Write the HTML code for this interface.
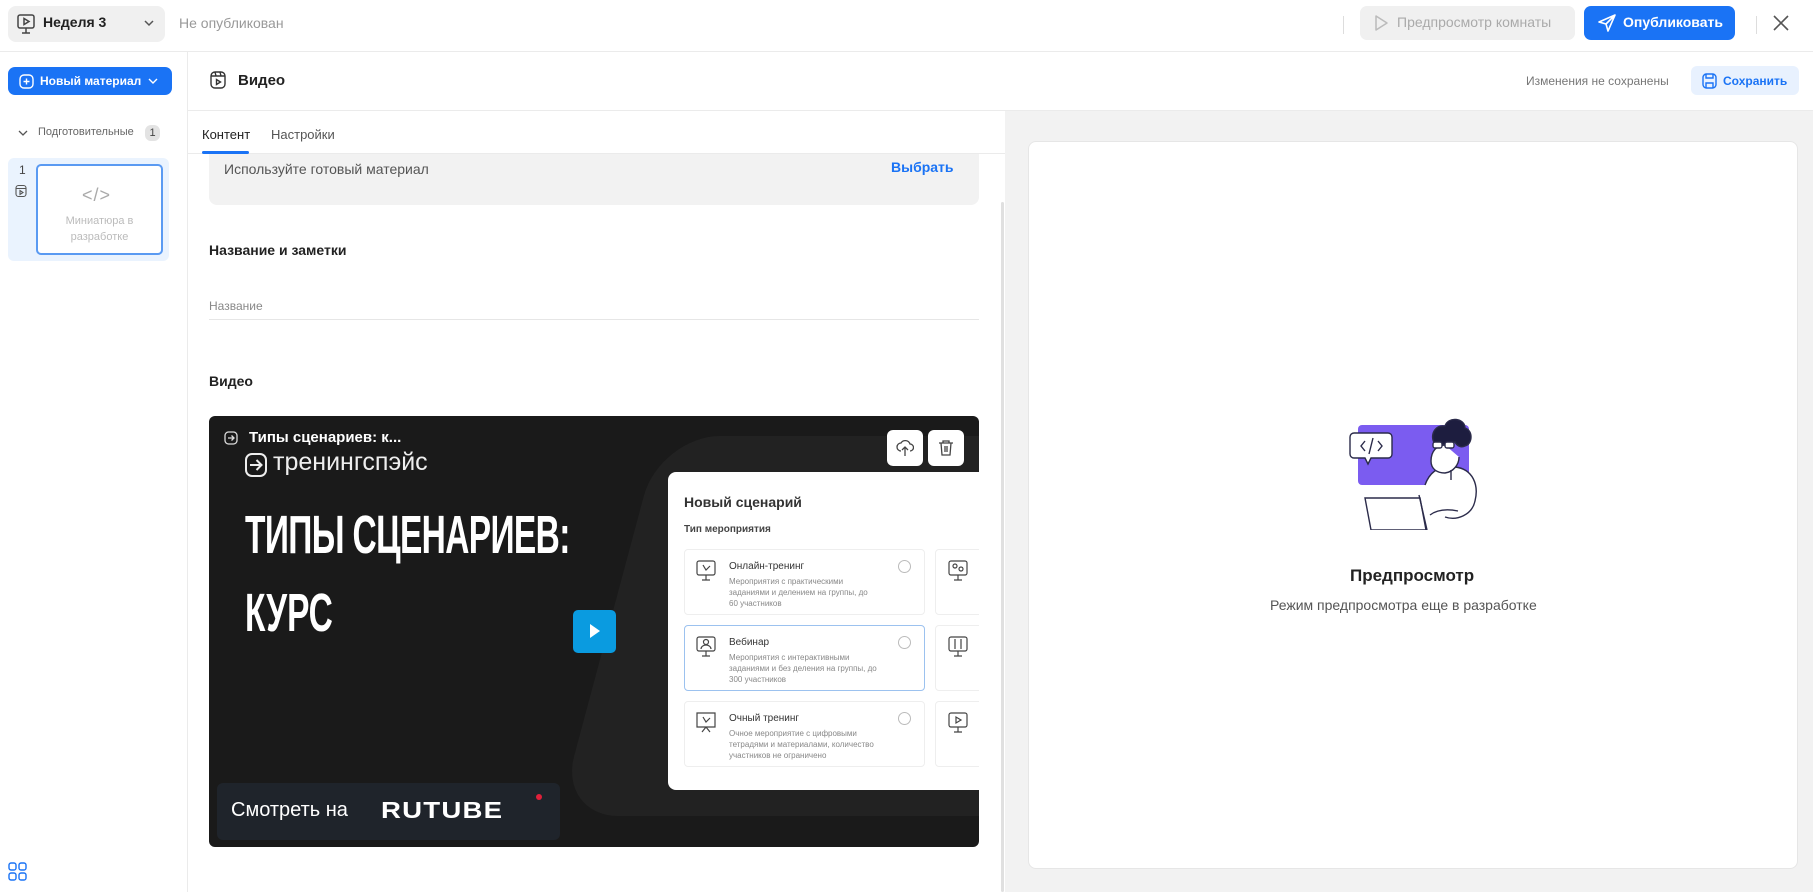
<!DOCTYPE html>
<html><head><meta charset="utf-8"><style>
*{box-sizing:border-box;margin:0;padding:0}
body{width:1813px;height:892px;overflow:hidden;background:#fff;font-family:"Liberation Sans",sans-serif;color:#222;position:relative}
.a{position:absolute}
.t{position:absolute;white-space:nowrap}
</style></head><body>
<div class="a" style="left:0;top:51px;width:1813px;height:1px;background:#ebebeb"></div>
<div class="a" style="left:8px;top:6px;width:157px;height:36px;background:#f0f0f0;border-radius:8px"></div>
<svg class="a" style="left:16px;top:13px" width="20" height="22" viewBox="0 0 20 22" fill="none" stroke="#444" stroke-width="1.5"><rect x="2" y="2" width="16" height="13" rx="2"/><path d="M8 5.5v6l5-3z"/><path d="M10 15v5M6 20h8"/></svg>
<div class="t" style="left:43px;top:14px;font-size:14px;font-weight:bold;color:#222">Неделя 3</div>
<svg class="a" style="left:143px;top:18px" width="12" height="10"><path d="M2 3l4 4 4-4" stroke="#555" stroke-width="1.5" fill="none"/></svg>
<div class="t" style="left:179px;top:15px;font-size:14px;color:#999">Не опубликован</div>
<div class="a" style="left:1343px;top:16px;width:1px;height:18px;background:#ddd"></div>
<div class="a" style="left:1360px;top:6px;width:215px;height:34px;background:#f0f0f0;border-radius:7px"></div>
<svg class="a" style="left:1373px;top:13px" width="16" height="20"><path d="M3 3l11 7-11 7z" stroke="#bbb" stroke-width="1.5" fill="none" stroke-linejoin="round"/></svg>
<div class="t" style="left:1397px;top:14px;font-size:14px;color:#aaa">Предпросмотр комнаты</div>
<div class="a" style="left:1584px;top:6px;width:151px;height:34px;background:#1a73f5;border-radius:7px"></div>
<svg class="a" style="left:1597px;top:13px" width="20" height="20" fill="none" stroke="#fff" stroke-width="1.6" stroke-linejoin="round"><path d="M18 2L2 9l7 2 2 7z M18 2L9 11"/></svg>
<div class="t" style="left:1623px;top:14px;font-size:14px;font-weight:bold;color:#fff">Опубликовать</div>
<div class="a" style="left:1756px;top:16px;width:1px;height:18px;background:#ddd"></div>
<svg class="a" style="left:1772px;top:14px" width="18" height="18"><path d="M2 2l14 14M16 2L2 16" stroke="#555" stroke-width="1.6"/></svg>

<div class="a" style="left:187px;top:52px;width:1px;height:840px;background:#ebebeb"></div>
<div class="a" style="left:8px;top:67px;width:164px;height:28px;background:#1a73f5;border-radius:7px"></div>
<svg class="a" style="left:19px;top:74px" width="15" height="15" fill="none" stroke="#fff" stroke-width="1.4"><rect x="1" y="1" width="13" height="13" rx="4"/><path d="M7.5 4.5v6M4.5 7.5h6"/></svg>
<div class="t" style="left:40px;top:74px;font-size:12px;font-weight:bold;color:#fff">Новый материал</div>
<svg class="a" style="left:148px;top:77px" width="10" height="8"><path d="M1 2l4 4 4-4" stroke="#fff" stroke-width="1.4" fill="none"/></svg>
<svg class="a" style="left:18px;top:129px" width="10" height="8"><path d="M1 2l4 4 4-4" stroke="#555" stroke-width="1.3" fill="none"/></svg>
<div class="t" style="left:38px;top:126px;font-size:11px;color:#666">Подготовительные</div>
<div class="a" style="left:145px;top:125px;width:15px;height:16px;background:#e3e3e3;border-radius:6px;font-size:11px;color:#444;text-align:center;line-height:16px">1</div>
<div class="a" style="left:8px;top:158px;width:161px;height:103px;background:#eaf3fe;border-radius:6px"></div>
<div class="t" style="left:19px;top:163px;font-size:12px;color:#444">1</div>
<svg class="a" style="left:15px;top:184px" width="12" height="14" fill="none" stroke="#555" stroke-width="1.1"><rect x="1" y="1.5" width="10" height="11" rx="2.5"/><path d="M1 4.5h10M5 6.5v4l3-2z"/></svg>
<div class="a" style="left:36px;top:164px;width:127px;height:91px;background:#fff;border:2px solid #5a9af2;border-radius:5px"></div>
<div class="t" style="left:82px;top:185px;font-size:18px;color:#aaa;letter-spacing:1px">&lt;/&gt;</div>
<div class="a" style="left:36px;top:213px;width:127px;text-align:center;font-size:11px;color:#bbb;line-height:16px">Миниатюра в<br>разработке</div>
<svg class="a" style="left:8px;top:862px" width="20" height="20" fill="none" stroke="#1a73f5" stroke-width="1.4"><rect x="1" y="1" width="7" height="7" rx="2"/><rect x="11" y="1" width="7" height="7" rx="2"/><rect x="1" y="11" width="7" height="7" rx="2"/><rect x="11" y="11" width="7" height="7" rx="2"/></svg>

<div class="a" style="left:188px;top:110px;width:1625px;height:1px;background:#ebebeb"></div>
<svg class="a" style="left:210px;top:70px" width="16" height="20" fill="none" stroke="#333" stroke-width="1.4"><rect x="1" y="2" width="14" height="16" rx="4"/><path d="M1 6h14M5 2l1 4M10 2l1 4M6.5 9.5v5l4-2.5z"/></svg>
<div class="t" style="left:238px;top:72px;font-size:15px;font-weight:bold;color:#222">Видео</div>
<div class="t" style="left:1526px;top:74px;font-size:12px;color:#777">Изменения не сохранены</div>
<div class="a" style="left:1691px;top:66px;width:108px;height:29px;background:#e8f1fe;border-radius:6px"></div>
<svg class="a" style="left:1702px;top:73px" width="15" height="16" fill="none" stroke="#1a73f5" stroke-width="1.4"><rect x="1" y="1" width="13" height="14" rx="3.5"/><path d="M4 1v4h7V1M4 15v-5h7v5"/></svg>
<div class="t" style="left:1723px;top:74px;font-size:12px;font-weight:bold;color:#1a73f5">Сохранить</div>

<div class="t" style="left:202px;top:127px;font-size:13px;color:#222">Контент</div>
<div class="t" style="left:271px;top:127px;font-size:13px;color:#555">Настройки</div>
<div class="a" style="left:188px;top:153px;width:817px;height:1px;background:#ebebeb"></div>
<div class="a" style="left:202px;top:151px;width:47px;height:3px;background:#1a73f5;border-radius:2px"></div>

<div class="a" style="left:209px;top:154px;width:770px;height:51px;background:#f2f2f2;border-radius:0 0 8px 8px"></div>
<div class="t" style="left:224px;top:161px;font-size:14px;color:#555">Используйте готовый материал</div>
<div class="t" style="left:891px;top:159px;font-size:14px;font-weight:bold;color:#1a73f5">Выбрать</div>
<div class="t" style="left:209px;top:242px;font-size:14px;font-weight:bold;color:#222">Название и заметки</div>
<div class="t" style="left:209px;top:299px;font-size:12px;color:#888">Название</div>
<div class="a" style="left:209px;top:319px;width:770px;height:1px;background:#e6e6e6"></div>
<div class="t" style="left:209px;top:373px;font-size:14px;font-weight:bold;color:#222">Видео</div>
<div class="a" style="left:1001px;top:202px;width:3px;height:690px;background:#e0e0e0;border-radius:2px"></div>

<div class="a" style="left:209px;top:416px;width:770px;height:431px;background:#1a1a1a;border-radius:6px;overflow:hidden">
  <div class="a" style="left:400px;top:20px;width:480px;height:380px;background:#222;border-radius:60px;transform:skewX(-15deg)"></div>
  <svg class="a" style="left:15px;top:15px" width="14" height="14" fill="none" stroke="#ddd" stroke-width="1.3"><rect x="1" y="1" width="12" height="12" rx="3.5"/><path d="M4 7h6M7.5 4.5L10 7l-2.5 2.5"/></svg>
  <div class="t" style="left:40px;top:13px;font-size:15px;font-weight:bold;color:#fff">Типы сценариев: к...</div>
  <svg class="a" style="left:35px;top:36px" width="24" height="26" fill="none" stroke="#eee" stroke-width="2"><rect x="2" y="2" width="20" height="22" rx="6"/><path d="M6 13h11M12.5 8l5 5-5 5"/></svg>
  <div class="t" style="left:64px;top:32px;font-size:25px;color:#eee">тренингспэйс</div>
  <div class="t" style="left:36px;top:88px;font-size:54px;font-weight:bold;color:#fff;transform:scaleX(0.62);transform-origin:left;letter-spacing:-1px">ТИПЫ СЦЕНАРИЕВ:</div>
  <div class="t" style="left:36px;top:166px;font-size:54px;font-weight:bold;color:#fff;transform:scaleX(0.62);transform-origin:left">КУРС</div>
  <div class="a" style="left:364px;top:194px;width:43px;height:43px;background:#0a9be0;border-radius:5px"></div>
  <svg class="a" style="left:380px;top:207px" width="12" height="16"><path d="M1 1l10 7-10 7z" fill="#fff"/></svg>
  <div class="a" style="left:8px;top:367px;width:343px;height:57px;background:#1f242b;border-radius:6px"></div>
  <div class="t" style="left:22px;top:383px;font-size:20px;color:#fff">Смотреть на</div>
  <div class="t" style="left:172px;top:381px;font-size:23px;font-weight:bold;color:#fff;letter-spacing:1px;transform:scaleX(1.2);transform-origin:left">RUTUBE</div>
  <div class="a" style="left:327px;top:378px;width:6px;height:6px;background:#e0203a;border-radius:50%"></div>
  <div class="a" style="left:678px;top:14px;width:36px;height:36px;background:#fff;border-radius:6px"></div>
  <svg class="a" style="left:687px;top:22px" width="18" height="20" fill="none" stroke="#444" stroke-width="1.3"><path d="M5 13a4 4 0 0 1 0-8 5 5 0 0 1 9 1 3.5 3.5 0 0 1 0 7M9 18V9M6 12l3-3 3 3"/></svg>
  <div class="a" style="left:719px;top:14px;width:36px;height:36px;background:#fff;border-radius:6px"></div>
  <svg class="a" style="left:729px;top:23px" width="16" height="18" fill="none" stroke="#444" stroke-width="1.3"><path d="M1 4h14M5 4V2h6v2M3 4l1 12h8l1-12M7 7v6M9 7v6"/></svg>
  <div class="a" style="left:459px;top:56px;width:320px;height:318px;background:#fff;border-radius:8px 0 0 8px">
    <div class="t" style="left:16px;top:22px;font-size:14px;font-weight:bold;color:#333">Новый сценарий</div>
    <div class="t" style="left:16px;top:52px;font-size:10px;font-weight:bold;color:#444">Тип мероприятия</div>
    <div class="a" style="left:16px;top:77px;width:241px;height:66px;border:1px solid #eee;border-radius:4px"></div>
    <div class="a" style="left:16px;top:153px;width:241px;height:66px;border:1.5px solid #9cc2ef;border-radius:4px"></div>
    <div class="a" style="left:16px;top:229px;width:241px;height:66px;border:1px solid #eee;border-radius:4px"></div>
    <div class="a" style="left:267px;top:77px;width:60px;height:66px;border:1px solid #eee;border-radius:4px"></div>
    <div class="a" style="left:267px;top:153px;width:60px;height:66px;border:1px solid #eee;border-radius:4px"></div>
    <div class="a" style="left:267px;top:229px;width:60px;height:66px;border:1px solid #eee;border-radius:4px"></div>
    <div class="t" style="left:61px;top:89px;font-size:10px;color:#333">Онлайн-тренинг</div>
    <div class="a" style="left:61px;top:104px;width:148px;font-size:8px;color:#888;line-height:11px">Мероприятия с практическими заданиями и делением на группы, до 60 участников</div>
    <div class="t" style="left:61px;top:165px;font-size:10px;color:#333">Вебинар</div>
    <div class="a" style="left:61px;top:180px;width:150px;font-size:8px;color:#888;line-height:11px">Мероприятия с интерактивными заданиями и без деления на группы, до 300 участников</div>
    <div class="t" style="left:61px;top:241px;font-size:10px;color:#333">Очный тренинг</div>
    <div class="a" style="left:61px;top:256px;width:160px;font-size:8px;color:#888;line-height:11px">Очное мероприятие с цифровыми тетрадями и материалами, количество участников не ограничено</div>
    <div class="a" style="left:230px;top:88px;width:13px;height:13px;border:1px solid #bbb;border-radius:50%"></div>
    <div class="a" style="left:230px;top:164px;width:13px;height:13px;border:1px solid #bbb;border-radius:50%"></div>
    <div class="a" style="left:230px;top:240px;width:13px;height:13px;border:1px solid #bbb;border-radius:50%"></div>
    <svg class="a" style="left:28px;top:88px" width="20" height="22" fill="none" stroke="#444" stroke-width="1.2"><rect x="1" y="1" width="18" height="14" rx="2"/><path d="M10 15v5M6 20h8M7 5l3 5 4-4"/></svg>
    <svg class="a" style="left:28px;top:164px" width="20" height="22" fill="none" stroke="#444" stroke-width="1.2"><rect x="1" y="1" width="18" height="14" rx="2"/><path d="M10 15v5M6 20h8"/><circle cx="10" cy="6" r="2.5"/><path d="M5 13a5 4 0 0 1 10 0"/></svg>
    <svg class="a" style="left:28px;top:240px" width="20" height="22" fill="none" stroke="#444" stroke-width="1.2"><path d="M1 1h18v14H1zM10 15l-4 5M10 15l4 5M7 5l3 5 4-4"/></svg>
    <svg class="a" style="left:280px;top:88px" width="20" height="22" fill="none" stroke="#444" stroke-width="1.2"><rect x="1" y="1" width="18" height="14" rx="2"/><path d="M10 15v5M6 20h8"/><circle cx="7" cy="6" r="2"/><circle cx="13" cy="9" r="2"/></svg>
    <svg class="a" style="left:280px;top:164px" width="20" height="22" fill="none" stroke="#444" stroke-width="1.2"><rect x="1" y="1" width="18" height="14" rx="2"/><path d="M10 15v5M6 20h8M7 3v10M13 3v10"/></svg>
    <svg class="a" style="left:280px;top:240px" width="20" height="22" fill="none" stroke="#444" stroke-width="1.2"><rect x="1" y="1" width="18" height="14" rx="2"/><path d="M10 15v5M6 20h8M8 5v6l5-3z"/></svg>
  </div>
</div>

<div class="a" style="left:1005px;top:111px;width:808px;height:781px;background:#f2f2f2"></div>
<div class="a" style="left:1028px;top:141px;width:770px;height:728px;background:#fff;border:1px solid #e6e6e6;border-radius:8px"></div>
<svg class="a" style="left:1345px;top:400px" width="140" height="130" fill="none" stroke="#2b2b4a" stroke-width="1.4">
  <rect x="13" y="25" width="111" height="60" rx="4" fill="#7b5cf0" stroke="none"/>
  <path d="M9 33h34a4 4 0 0 1 4 4v17a4 4 0 0 1-4 4H26l-3 6-3-6H9a4 4 0 0 1-4-4V37a4 4 0 0 1 4-4z" fill="#fff"/>
  <path d="M20 41l-4 5 4 5M33 41l4 5-4 5M28 38l-4 16"/>
  <path d="M80 85c5-14 15-20 30-18 18 2 24 18 20 34-3 14-18 20-30 16" fill="#fff"/>
  <path d="M100 45c-8 0-14 6-14 16 0 8 6 12 14 12 8-1 14-8 14-16" fill="#fff"/>
  <path d="M90 44c-6-8 0-20 10-18 3-10 20-8 20 2 8 2 8 16 0 18-4 2-8 0-10-4-6 2-14 4-20 2z" fill="#1d1d3f"/>
  <rect x="88" y="42" width="9" height="6" rx="2" fill="#fff"/><rect x="100" y="42" width="9" height="6" rx="2" fill="#fff"/>
  <path d="M106 70v10"/>
  <path d="M20 98h55l6 32H26z" fill="#fff"/>
  <path d="M74 95l8 35"/>
  <path d="M85 115c8-6 18-6 28-4" />
</svg>
<div class="t" style="left:1350px;top:566px;font-size:17px;font-weight:bold;color:#222">Предпросмотр</div>
<div class="t" style="left:1270px;top:597px;font-size:14px;color:#555">Режим предпросмотра еще в разработке</div>
</body></html>
